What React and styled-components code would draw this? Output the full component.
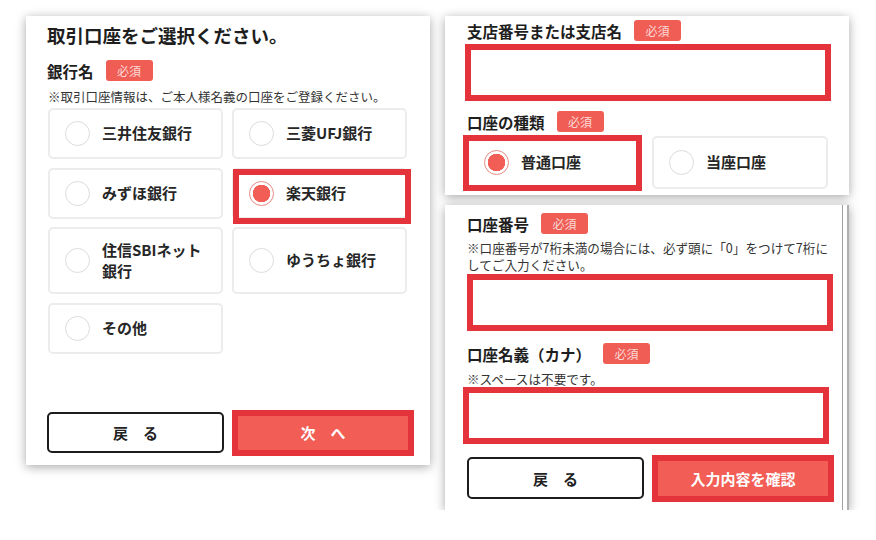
import React from "react"
import styled, { createGlobalStyle } from "styled-components"

const GlobalStyle = createGlobalStyle`
  body {
    margin: 0;
    background: #ffffff;
    font-family: "Noto Sans CJK JP", "Noto Sans", sans-serif;
    color: #222;
  }
`

const RED = "#e4333b"
const SALMON = "#f25d55"

const banks = [
  { name: "三井住友銀行" },
  { name: "三菱UFJ銀行" },
  { name: "みずほ銀行" },
  { name: "楽天銀行", checked: true },
  { name: "住信SBIネット銀行", wrap: true },
  { name: "ゆうちょ銀行" },
  { name: "その他" },
]

const Radio = ({ checked }) => <RadioCircle $checked={checked} />

const Label = ({ children }) => (
  <LabelRow>
    <LabelText>{children}</LabelText>
    <Badge>必須</Badge>
  </LabelRow>
)

const App = () => (
  <>
    <GlobalStyle />
    <Page>
      <LeftPanel>
        <Title>取引口座をご選択ください。</Title>
        <Label>銀行名</Label>
        <Note>※取引口座情報は、ご本人様名義の口座をご登録ください。</Note>
        <ChoiceGrid>
          {banks.map(b => (
            <Choice key={b.name} $marked={b.checked}>
              <Radio checked={b.checked} />
              <ChoiceText>
                {b.wrap ? (
                  <>
                    住信SBIネット
                    <br />
                    銀行
                  </>
                ) : (
                  b.name
                )}
              </ChoiceText>
            </Choice>
          ))}
        </ChoiceGrid>
        <ButtonRow>
          <BackButton>戻　る</BackButton>
          <NextButton>次　へ</NextButton>
        </ButtonRow>
      </LeftPanel>

      <RightColumn>
        <TopPanel>
          <Label>支店番号または支店名</Label>
          <Field $top={3} $nudge={-2} />
          <Spacer $h={10} />
          <Label>口座の種類</Label>
          <TypeGrid>
            <TypeChoice $marked>
              <Radio checked />
              <ChoiceText>普通口座</ChoiceText>
            </TypeChoice>
            <TypeChoice>
              <Radio />
              <ChoiceText>当座口座</ChoiceText>
            </TypeChoice>
          </TypeGrid>
        </TopPanel>

        <BottomPanel>
          <Label>口座番号</Label>
          <SmallNote $top={5}>
            ※口座番号が7桁未満の場合には、必ず頭に「0」をつけて7桁にしてご入力ください。
          </SmallNote>
          <Field $top={1} $nudge={0} />
          <Spacer $h={12} />
          <Label>口座名義（カナ）</Label>
          <SmallNote $top={6}>※スペースは不要です。</SmallNote>
          <Field $top={0} $nudge={-4} />
          <ButtonRow $top={13}>
            <BackButton $h={42}>戻　る</BackButton>
            <NextButton $h={35}>入力内容を確認</NextButton>
          </ButtonRow>
        </BottomPanel>
      </RightColumn>
    </Page>
  </>
)

export default App

const Page = styled.div`
  display: flex;
  align-items: flex-start;
  gap: 15px;
  padding: 16px 0 0 26px;
`

const Panel = styled.div`
  position: relative;
  width: 404px;
  box-sizing: border-box;
  background: #fff;
  box-shadow: 0 2px 10px rgba(0, 0, 0, 0.35);
`

const LeftPanel = styled(Panel)`
  height: 449px;
  display: flex;
  flex-direction: column;
  padding: 7px 23px 12px 21px;
`

const RightColumn = styled.div`
  display: flex;
  flex-direction: column;
  gap: 10px;
`

const TopPanel = styled(Panel)`
  height: 179px;
  padding: 4px 21px 0 22px;
`

const BottomPanel = styled(Panel)`
  height: 305px;
  padding: 8px 16px 0 22px;
  box-shadow: inset -2px 0 0 #b0b0b0, inset -6px 0 0 #fff, inset -7px 0 0 #a0a0a0,
    0 2px 10px rgba(0, 0, 0, 0.35);
`

const Title = styled.h2`
  margin: 0 0 13px;
  font-size: 18.5px;
  line-height: 24px;
  font-weight: 700;
  color: #1e1e1e;
`

const LabelRow = styled.div`
  display: flex;
  align-items: center;
  gap: 12px;
  height: 21px;
`

const LabelText = styled.span`
  font-size: 15.5px;
  font-weight: 700;
  color: #1e1e1e;
`

const Badge = styled.span`
  display: inline-flex;
  align-items: center;
  justify-content: center;
  width: 47px;
  height: 21px;
  border-radius: 3px;
  background: #ef5d55;
  color: #fcd9d6;
  font-size: 12px;
  font-weight: 400;
`

const Note = styled.p`
  margin: 8px 0 3px 1px;
  font-size: 12.5px;
  line-height: 16px;
  color: #333;
`

const SmallNote = styled.p`
  margin: ${p => p.$top}px 0 0 0;
  font-size: 12.6px;
  line-height: 17px;
  color: #333;
  width: 364px;
`

const ChoiceGrid = styled.div`
  display: grid;
  grid-template-columns: 175px 175px;
  gap: 8.5px 9px;
  margin-left: 1px;
`

const Choice = styled.div`
  position: relative;
  display: flex;
  align-items: center;
  gap: 12px;
  min-height: 51px;
  box-sizing: border-box;
  padding: 11px 10px 11px 17px;
  border: 2px solid #ececec;
  border-radius: 5px;
  background: #fff;

  ${p =>
    p.$marked &&
    `
    &::after {
      content: "";
      position: absolute;
      left: -1px;
      top: -1px;
      right: -6px;
      bottom: -7px;
      border: 6px solid ${RED};
    }
  `}
`

const RadioCircle = styled.span`
  flex: none;
  width: 25px;
  height: 25px;
  box-sizing: border-box;
  border-radius: 50%;
  border: 1.5px solid ${p => (p.$checked ? "#e88a84" : "#dcdcdc")};
  background: ${p => (p.$checked ? `radial-gradient(circle, ${SALMON} 0 8.5px, #fff 9px)` : "#fff")};
  margin-left: -2px;
`

const ChoiceText = styled.span`
  font-size: 15px;
  line-height: 20.5px;
  font-weight: 600;
  color: #262626;
`

const ButtonRow = styled.div`
  display: grid;
  grid-template-columns: 177px 176px;
  gap: 8px;
  margin-top: ${p => (p.$top ? `${p.$top}px` : "auto")};
  align-items: center;
`

const BackButton = styled.div`
  height: ${p => p.$h || 41}px;
  box-sizing: border-box;
  display: flex;
  align-items: center;
  justify-content: center;
  border: 2px solid #1c1c1c;
  border-radius: 5px;
  font-size: 15px;
  font-weight: 700;
  color: #222;
`

const NextButton = styled.div`
  height: ${p => p.$h || 34}px;
  display: flex;
  align-items: center;
  justify-content: center;
  background: ${SALMON};
  outline: 6px solid ${RED};
  outline-offset: 0;
  font-size: 15px;
  font-weight: 700;
  color: #fff;
  margin: 0 0 0 6px;
`

const Field = styled.div`
  width: 366px;
  height: 57px;
  box-sizing: border-box;
  margin: ${p => p.$top}px 0 0 ${p => p.$nudge}px;
  border: 6px solid ${RED};
  background: #fff;
`

const Spacer = styled.div`
  height: ${p => p.$h}px;
`

const TypeGrid = styled.div`
  display: grid;
  grid-template-columns: 176px 176px;
  gap: 9px;
  margin-top: 4px;
`

const TypeChoice = styled(Choice)`
  height: 53px;
  min-height: 0;
  padding: 0 10px 0 17px;

  ${p =>
    p.$marked &&
    `
    border-color: transparent;
    &::after {
      left: -6px;
      top: -3px;
      right: -1px;
      bottom: -4px;
    }
  `}
`
